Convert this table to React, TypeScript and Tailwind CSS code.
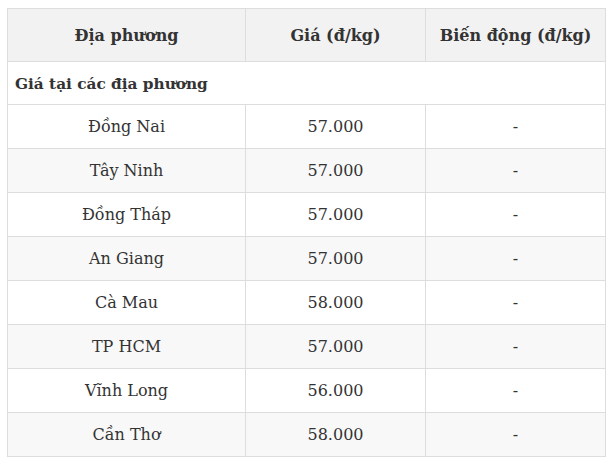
const rows: [string, string, string][] = [
  ['Đồng Nai', '57.000', '-'],
  ['Tây Ninh', '57.000', '-'],
  ['Đồng Tháp', '57.000', '-'],
  ['An Giang', '57.000', '-'],
  ['Cà Mau', '58.000', '-'],
  ['TP HCM', '57.000', '-'],
  ['Vĩnh Long', '56.000', '-'],
  ['Cần Thơ', '58.000', '-'],
];

export default function App() {
  return (
    <div className="min-h-[465px] w-[614px] bg-white pt-2 pl-[7px] font-['DejaVu_Serif','Liberation_Serif',serif] text-[#333]">
      <table className="w-[598px] table-fixed border-collapse text-[16px]">
        <colgroup>
          <col className="w-[238px]" />
          <col className="w-[180px]" />
          <col className="w-[180px]" />
        </colgroup>
        <thead>
          <tr className="h-[53px] bg-[#f2f2f2]">
            <th className="border border-[#dddddd] pt-px text-center font-bold">Địa phương</th>
            <th className="border border-[#dddddd] pt-px text-center font-bold">Giá (đ/kg)</th>
            <th className="border border-[#dddddd] pt-px text-center font-bold">Biến động (đ/kg)</th>
          </tr>
        </thead>
        <tbody>
          <tr className="h-[43px] bg-white">
            <td colSpan={3} className="border border-[#dddddd] pt-[3px] pl-[7px] text-left text-[15.3px] font-bold">
              Giá tại các địa phương
            </td>
          </tr>
          {rows.map(([name, price, change], i) => (
            <tr key={name} className={`h-[44px] ${i % 2 === 1 ? 'bg-[#f8f8f8]' : 'bg-white'}`}>
              <td className="border border-[#dddddd] pt-px text-center">{name}</td>
              <td className="border border-[#dddddd] pt-px text-center">{price}</td>
              <td className="border border-[#dddddd] pt-px text-center">{change}</td>
            </tr>
          ))}
        </tbody>
      </table>
    </div>
  );
}
